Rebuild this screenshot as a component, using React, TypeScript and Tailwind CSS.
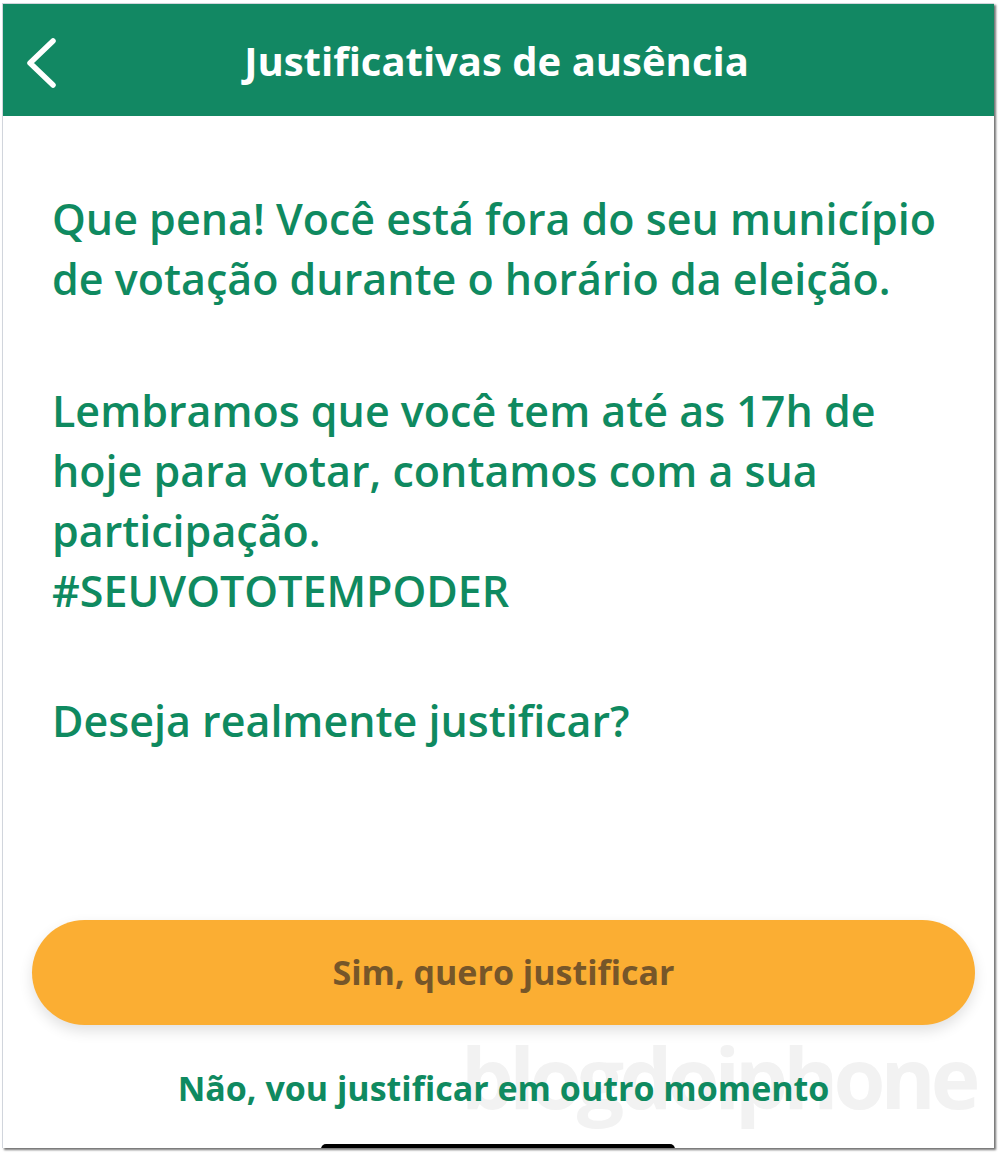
import React from 'react';

const green = 'text-[#0f8a60]';

const App: React.FC = () => {
    return (
        <div className="w-[1000px] h-[1154px] bg-white pt-[3px] pl-[2px]" style={{ fontFamily: '"Open Sans", "Noto Sans", sans-serif' }}>
            {/* Phone screen frame */}
            <div className="relative w-[992px] h-[1145px] bg-white border-l border-t border-gray-300 shadow-[2px_2px_2px_rgba(0,0,0,0.55)] flex flex-col overflow-hidden">
                {/* Header */}
                <div className="h-[112px] bg-[#128863] flex items-center relative shrink-0">
                    <div className="absolute left-[19px] top-[31px]">
                        <svg width="36" height="56" viewBox="0 0 36 56" fill="none">
                            <polyline points="31,6 8,28 31,50" stroke="white" strokeWidth="5.5" strokeLinecap="round" strokeLinejoin="round" />
                        </svg>
                    </div>
                    <h1 className="w-full text-center text-[40px] font-bold text-white pt-[2px] pr-[4px]">
                        Justificativas de ausência
                    </h1>
                </div>

                {/* Body */}
                <div className={`pl-[49px] pr-[50px] pt-[73px] text-[43px] font-semibold leading-[60px] ${green}`}>
                    <p>Que pena! Você está fora do seu município de votação durante o horário da eleição.</p>
                    <p className="mt-[72px]">
                        Lembramos que você tem até as 17h de hoje para votar, contamos com a sua participação.
                        <br />
                        #SEUVOTOTEMPODER
                    </p>
                    <p className="mt-[70px]">Deseja realmente justificar?</p>
                </div>

                {/* Watermark */}
                <div className="absolute left-[458px] top-[1031px] text-[84px] font-bold text-[#f2f2f2] tracking-[-5px] leading-none select-none">
                    blogdoiphone
                </div>

                {/* Actions */}
                <div className="relative z-10 mt-auto flex flex-col pb-[40px]">
                    <button className="ml-[29px] mr-[19px] h-[105px] rounded-full bg-[#fbae33] shadow-[0_6px_14px_rgba(0,0,0,0.12)] text-[34px] font-bold text-[#765629]">
                        Sim, quero justificar
                    </button>
                    <div className={`mt-[43px] h-[40px] text-center text-[34px] font-bold leading-[40px] ${green} pl-[10px]`}>
                        Não, vou justificar em outro momento
                    </div>
                </div>

                {/* Home indicator */}
                <div className="absolute bottom-[-6px] left-[318px] w-[354px] h-[10px] rounded-full bg-black" />
            </div>
        </div>
    );
};

export default App;
